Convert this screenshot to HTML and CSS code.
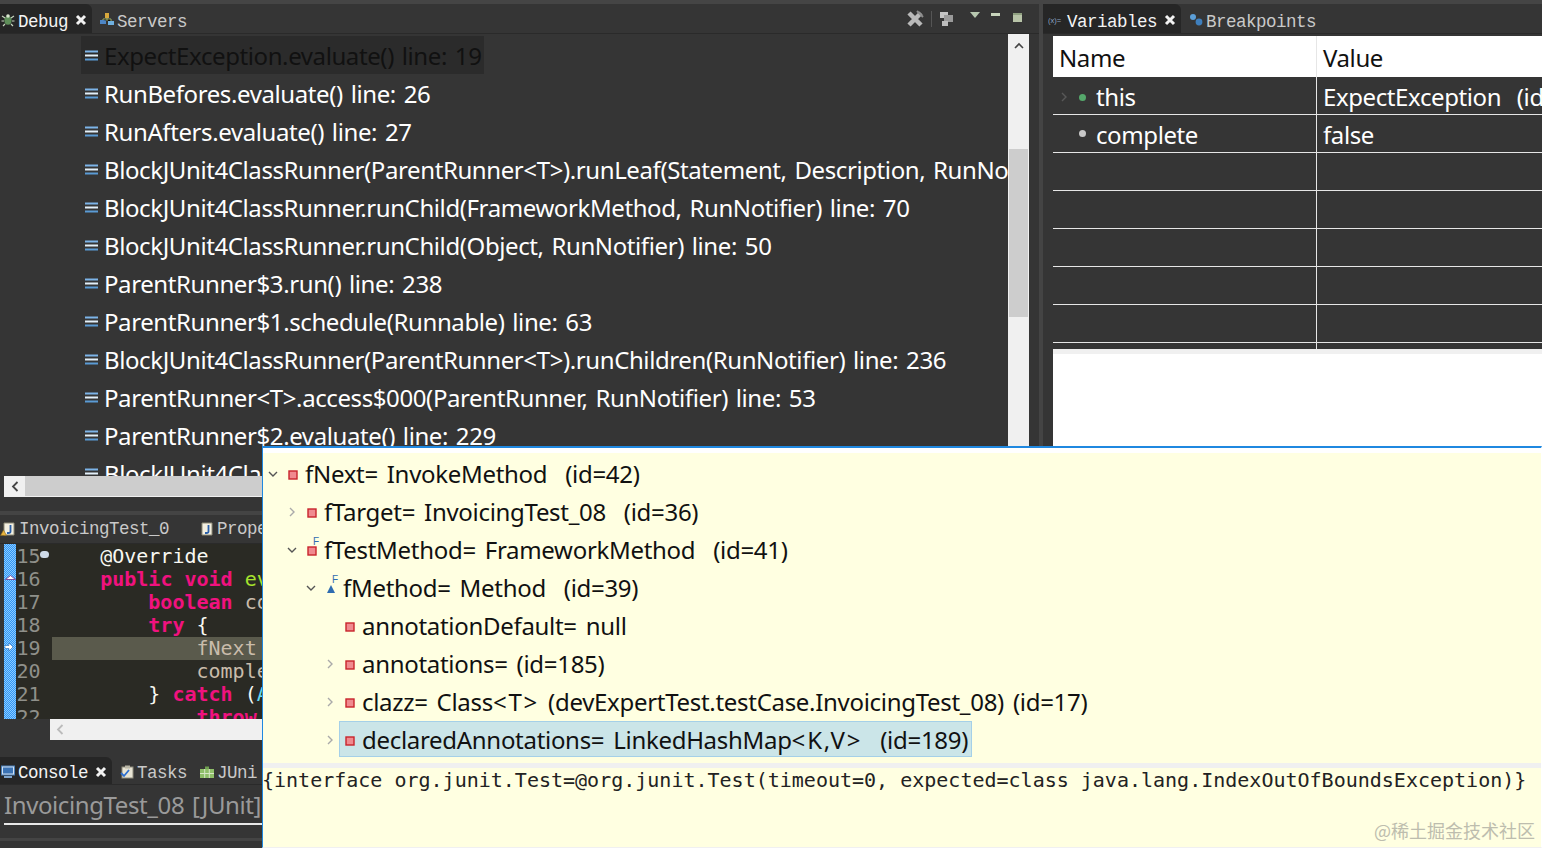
FILE: index.html
```html
<!DOCTYPE html>
<html lang="en">
  <head>
    <meta charset="UTF-8" />
    <meta name="viewport" content="width=device-width, initial-scale=1.0" />
    <title>Eclipse Debug</title>
    <link rel="stylesheet" href="styles.css">
  </head>
  <body>
    <svg class="defs" width="0" height="0">
      <defs>
        <symbol id="frame" viewBox="0 0 13 11">
          <rect x="0" y="0.5" width="13" height="2" fill="#7db4e8"/>
          <rect x="0" y="4.5" width="13" height="2" fill="#e2eff9"/>
          <rect x="0" y="8.5" width="13" height="2" fill="#5b9bd5"/>
        </symbol>
        <symbol id="close" viewBox="0 0 12 12">
          <path d="M2 2 L10 10 M10 2 L2 10" stroke="#f2f2f2" stroke-width="3"/>
        </symbol>
        <symbol id="field" viewBox="0 0 10 10">
          <rect x="1" y="1" width="8" height="8" fill="#f08a8f" stroke="#c8242c" stroke-width="1.4"/>
        </symbol>
        <symbol id="open" viewBox="0 0 10 10">
          <path d="M1 3 L5 7 L9 3" fill="none" stroke="#555" stroke-width="1.4"/>
        </symbol>
        <symbol id="closed" viewBox="0 0 10 10">
          <path d="M3 1 L7 5 L3 9" fill="none" stroke="#aaa" stroke-width="1.4"/>
        </symbol>
        <symbol id="javafile" viewBox="0 0 12 14">
          <path d="M1 1 H11 V13 H1 Z" fill="#f3efe0" stroke="#8d8a76"/>
          <path d="M7.5 3 V9.5 Q7.5 11 5.5 11 H4" fill="none" stroke="#2a5fa8" stroke-width="1.8"/>
        </symbol>
        <pattern id="dots" width="2" height="2" patternUnits="userSpaceOnUse">
          <rect width="1" height="1" fill="#8ccaff"/>
          <rect x="1" y="1" width="1" height="1" fill="#8ccaff"/>
        </pattern>
      </defs>
    </svg>

    <div class="workbench">
      <div class="left-col">
        <section class="debug-view">
          <div class="tabbar">
            <div class="tab active first">
              <svg class="tab-icon" viewBox="0 0 14 14"><ellipse cx="7" cy="7.5" rx="3.6" ry="4.2" fill="#5f8f5a"/><path d="M1 3 L4 5 M13 3 L10 5 M0.5 8 H3 M11 8 H13.5 M2 13 L4 11 M12 13 L10 11" stroke="#c9d6c0" stroke-width="1.2"/><circle cx="7" cy="3" r="1.8" fill="#d8e6cf"/></svg>
              <span>Debug</span>
              <svg class="tab-close"><use href="#close"/></svg>
            </div>
            <div class="tab">
              <svg class="tab-icon" viewBox="0 0 14 14"><rect x="5" y="0" width="4" height="5" fill="#d8a83c"/><rect x="0" y="7" width="6" height="4" fill="#4d86c6"/><rect x="8" y="8" width="6" height="4" fill="#6fb0e0"/><path d="M7 5 V8 M3 7 V6 H11 V8" stroke="#9fb06a"/></svg>
              <span>Servers</span>
            </div>
            <div class="tab-tools">
              <svg width="18" height="18" viewBox="0 0 18 18"><path d="M3 3 L15 15 M15 3 L3 15" stroke="#b9b9b9" stroke-width="4.5"/><path d="M11 1 L17 7" stroke="#8c8c8c" stroke-width="2"/></svg>
              <i class="tool-sep"></i>
              <svg width="15" height="16" viewBox="0 0 15 16"><rect x="1" y="1" width="8" height="6" fill="#c4c4c4"/><rect x="5" y="4" width="9" height="7" fill="#9a9a9a"/><rect x="3" y="10" width="6" height="5" fill="#bdbdbd"/></svg>
              <svg class="tool-menu" width="10" height="6" viewBox="0 0 10 6"><path d="M0 0 H10 L5 6 Z" fill="#b8c8b0"/></svg>
              <i class="tool-min"></i>
              <i class="tool-max"></i>
            </div>
          </div>
          <div class="tree-area">
            <div class="frames">
              <div class="frame-row current"><svg class="frame-icon"><use href="#frame"/></svg><span class="frame-label">ExpectException.evaluate() line: 19</span></div>
              <div class="frame-row"><svg class="frame-icon"><use href="#frame"/></svg><span class="frame-label">RunBefores.evaluate() line: 26</span></div>
              <div class="frame-row"><svg class="frame-icon"><use href="#frame"/></svg><span class="frame-label">RunAfters.evaluate() line: 27</span></div>
              <div class="frame-row"><svg class="frame-icon"><use href="#frame"/></svg><span class="frame-label">BlockJUnit4ClassRunner(ParentRunner&lt;T&gt;).runLeaf(Statement, Description, RunNotifier) line: 78</span></div>
              <div class="frame-row"><svg class="frame-icon"><use href="#frame"/></svg><span class="frame-label">BlockJUnit4ClassRunner.runChild(FrameworkMethod, RunNotifier) line: 70</span></div>
              <div class="frame-row"><svg class="frame-icon"><use href="#frame"/></svg><span class="frame-label">BlockJUnit4ClassRunner.runChild(Object, RunNotifier) line: 50</span></div>
              <div class="frame-row"><svg class="frame-icon"><use href="#frame"/></svg><span class="frame-label">ParentRunner$3.run() line: 238</span></div>
              <div class="frame-row"><svg class="frame-icon"><use href="#frame"/></svg><span class="frame-label">ParentRunner$1.schedule(Runnable) line: 63</span></div>
              <div class="frame-row"><svg class="frame-icon"><use href="#frame"/></svg><span class="frame-label">BlockJUnit4ClassRunner(ParentRunner&lt;T&gt;).runChildren(RunNotifier) line: 236</span></div>
              <div class="frame-row"><svg class="frame-icon"><use href="#frame"/></svg><span class="frame-label">ParentRunner&lt;T&gt;.access$000(ParentRunner, RunNotifier) line: 53</span></div>
              <div class="frame-row"><svg class="frame-icon"><use href="#frame"/></svg><span class="frame-label">ParentRunner$2.evaluate() line: 229</span></div>
              <div class="frame-row"><svg class="frame-icon"><use href="#frame"/></svg><span class="frame-label">BlockJUnit4Cla</span></div>
            </div>
            <div class="vscroll">
              <svg class="vscroll-arrow" width="10" height="7" viewBox="0 0 10 7"><path d="M1 6 L5 2 L9 6" fill="none" stroke="#444" stroke-width="1.6"/></svg>
              <div class="vscroll-thumb"></div>
            </div>
          </div>
          <div class="hscroll">
            <div class="hscroll-btn"><svg width="8" height="11" viewBox="0 0 8 11"><path d="M6.5 1 L2 5.5 L6.5 10" fill="none" stroke="#444" stroke-width="1.8"/></svg></div>
            <div class="hscroll-thumb"></div>
          </div>
        </section>

        <section class="editor-view">
          <div class="tabbar editor-tabs">
            <div class="tab first">
              <svg class="tab-icon file-warn" viewBox="0 0 15 14"><use href="#javafile" x="3" width="12" height="14"/><path d="M0.5 13.5 L3.5 8 L6.5 13.5 Z" fill="#e8b23c" stroke="#8a6a20" stroke-width="0.6"/></svg>
              <span>InvoicingTest_0</span>
            </div>
            <div class="tab tab-wide">
              <svg class="tab-icon file"><use href="#javafile"/></svg>
              <span>Prope</span>
            </div>
          </div>
          <div class="editor">
            <div class="ruler">
              <svg class="ruler-dots" width="12" height="175"><rect width="12" height="175" fill="url(#dots)"/></svg>
              <svg class="ruler-mark override-mark" width="11" height="5" viewBox="0 0 11 5"><path d="M0.5 4.5 L5.5 0.5 L10.5 4.5 Z" fill="#fff" stroke="#7a4fa0"/></svg>
              <svg class="ruler-mark pc-mark" width="8" height="8" viewBox="0 0 8 8"><path d="M0 2.5 H4 V0 L8 4 L4 8 V5.5 H0 Z" fill="#fff" stroke="#2d6cb5" stroke-width="0.6"/></svg>
            </div>
            <div class="line-numbers">
              <div>15</div><div>16</div><div>17</div><div>18</div><div>19</div><div>20</div><div>21</div><div>22</div>
            </div>
            <i class="fold-mark"></i>
            <div class="code">
              <div class="code-line"><span class="plain">    @Override</span></div>
              <div class="code-line"><span class="plain">    </span><b class="kw">public void</b> <span class="fn">ev</span></div>
              <div class="code-line"><span class="plain">        </span><b class="kw">boolean</b> <span class="var">co</span></div>
              <div class="code-line"><span class="plain">        </span><b class="kw">try</b> <span class="plain">{</span></div>
              <div class="code-line hl"><span class="var">            fNext</span></div>
              <div class="code-line"><span class="var">            comple</span></div>
              <div class="code-line"><span class="plain">        } </span><b class="kw">catch</b> <span class="plain">(</span><span class="type">A</span></div>
              <div class="code-line"><span class="plain">            </span><b class="kw">throw</b></div>
            </div>
          </div>
          <div class="editor-hscroll">
            <svg width="8" height="11" viewBox="0 0 8 11"><path d="M6.5 1 L2 5.5 L6.5 10" fill="none" stroke="#bbb" stroke-width="1.8"/></svg>
          </div>
        </section>

        <section class="console-view">
          <div class="tabbar console-tabs">
            <div class="tab active first">
              <svg class="tab-icon" viewBox="0 0 14 14"><rect x="0.5" y="1" width="13" height="9" fill="#cfe0f2" stroke="#4a7fb8"/><rect x="2" y="2.5" width="10" height="6" fill="#3b73b5"/><rect x="3" y="11" width="8" height="2" fill="#7fa6cf"/></svg>
              <span>Console</span>
              <svg class="tab-close"><use href="#close"/></svg>
            </div>
            <div class="tab">
              <svg class="tab-icon" viewBox="0 0 14 14"><rect x="2" y="2" width="11" height="11" fill="#e8e4d4" stroke="#8f8c7c"/><rect x="5" y="0.5" width="5" height="3" fill="#b9b6a6"/><path d="M1 8 L4 11 L9 5" fill="none" stroke="#2d6fd0" stroke-width="1.8"/></svg>
              <span>Tasks</span>
            </div>
            <div class="tab">
              <svg class="tab-icon" viewBox="0 0 14 14"><rect x="0" y="4" width="14" height="9" fill="#8fbf6a"/><path d="M0 8.5 H14 M4.7 4 V13 M9.3 4 V13" stroke="#d6e8c6"/><rect x="5" y="1.5" width="4" height="2.5" fill="#6f9f50"/></svg>
              <span>JUni</span>
            </div>
          </div>
          <div class="console-title">InvoicingTest_08 [JUnit]</div>
          <div class="console-rule"></div>
          <div class="console-band"></div>
        </section>
      </div>

      <div class="sash"></div>

      <div class="right-col">
        <div class="tabbar">
          <div class="tab active var-tab">
            <svg class="tab-icon var-icon" viewBox="0 0 16 12"><text class="var-glyph" x="0" y="9">(x)=</text></svg>
            <span>Variables</span>
            <svg class="tab-close"><use href="#close"/></svg>
          </div>
          <div class="tab">
            <svg class="tab-icon" viewBox="0 0 14 14"><circle cx="4" cy="4" r="3" fill="#5c9fd8"/><circle cx="10" cy="9" r="3.4" fill="#3f7fbd"/></svg>
            <span>Breakpoints</span>
          </div>
        </div>
        <div class="vars">
          <div class="vars-head">
            <div class="col-name">Name</div>
            <div class="col-value">Value</div>
          </div>
          <div class="vars-row">
            <div class="col-name"><svg class="var-twist"><use href="#closed"/></svg><i class="dot green"></i>this</div>
            <div class="col-value">ExpectException  (id=35)</div>
          </div>
          <div class="vars-row">
            <div class="col-name"><span class="var-twist"></span><i class="dot grey"></i>complete</div>
            <div class="col-value">false</div>
          </div>
          <div class="vars-row"><div class="col-name"></div><div class="col-value"></div></div>
          <div class="vars-row"><div class="col-name"></div><div class="col-value"></div></div>
          <div class="vars-row"><div class="col-name"></div><div class="col-value"></div></div>
          <div class="vars-row"><div class="col-name"></div><div class="col-value"></div></div>
          <div class="vars-row"><div class="col-name"></div><div class="col-value"></div></div>
          <div class="vars-row short"><div class="col-name"></div><div class="col-value"></div></div>
          <div class="vars-strip"></div>
          <div class="vars-detail"></div>
        </div>
      </div>
    </div>

    <!-- inspect popup, sits over the views -->
    <div class="popup">
      <div class="popup-tree">
        <div class="pop-row depth-0"><svg class="twist"><use href="#open"/></svg><span class="pop-item"><svg class="pop-icon"><use href="#field"/></svg><span>fNext= InvokeMethod  (id=42)</span></span></div>
        <div class="pop-row depth-1"><svg class="twist"><use href="#closed"/></svg><span class="pop-item"><svg class="pop-icon"><use href="#field"/></svg><span>fTarget= InvoicingTest_08  (id=36)</span></span></div>
        <div class="pop-row depth-1"><svg class="twist"><use href="#open"/></svg><span class="pop-item"><span class="pop-icon-wrap"><svg class="pop-icon"><use href="#field"/></svg><em class="final">F</em></span><span>fTestMethod= FrameworkMethod  (id=41)</span></span></div>
        <div class="pop-row depth-2"><svg class="twist"><use href="#open"/></svg><span class="pop-item"><span class="pop-icon-wrap"><svg class="pop-icon" viewBox="0 0 10 10"><path d="M5 1 L9 9 H1 Z" fill="#2f6cb0"/></svg><em class="final">F</em></span><span>fMethod= Method  (id=39)</span></span></div>
        <div class="pop-row depth-3"><span class="twist"></span><span class="pop-item"><svg class="pop-icon"><use href="#field"/></svg><span>annotationDefault= null</span></span></div>
        <div class="pop-row depth-3"><svg class="twist"><use href="#closed"/></svg><span class="pop-item"><svg class="pop-icon"><use href="#field"/></svg><span>annotations= (id=185)</span></span></div>
        <div class="pop-row depth-3"><svg class="twist"><use href="#closed"/></svg><span class="pop-item"><svg class="pop-icon"><use href="#field"/></svg><span>clazz= Class<span class="generic">&lt;T&gt;</span> (devExpertTest.testCase.InvoicingTest_08) (id=17)</span></span></div>
        <div class="pop-row depth-3"><svg class="twist"><use href="#closed"/></svg><span class="pop-item selected"><svg class="pop-icon"><use href="#field"/></svg><span>declaredAnnotations= LinkedHashMap<span class="generic">&lt;K,V&gt;</span>  (id=189)</span></span></div>
      </div>
      <div class="pop-sep"></div>
      <div class="pop-detail">{interface org.junit.Test=@org.junit.Test(timeout=0, expected=class java.lang.IndexOutOfBoundsException)}</div>
      <div class="watermark">@稀土掘金技术社区</div>
    </div>
  </body>
</html>
```

FILE: styles.css
```css
html, body {
  margin: 0;
  padding: 0;
  height: 100%;
  overflow: hidden;
}

body {
  position: relative;
  background: #353535;
  font-family: "Noto Sans", Arial, sans-serif;
  font-size: 24px;
  letter-spacing: -0.4px;
  word-spacing: 2px;
  color: #fff;
}

.defs {
  position: absolute;
}

.workbench {
  display: flex;
  height: 848px;
  padding-top: 4px;
  box-sizing: border-box;
  background: linear-gradient(#454545 0, #454545 4px, #353535 4px);
}

.left-col {
  width: 1039px;
  display: flex;
  flex-direction: column;
}

.sash {
  width: 4px;
  background: #444;
}

.right-col {
  flex: 1;
  min-width: 0;
  display: flex;
  flex-direction: column;
  height: 442px;
}

/* tabs */
.tabbar {
  height: 30px;
  box-sizing: border-box;
  display: flex;
  align-items: stretch;
  border-bottom: 1px solid #2a2a2a;
  font-family: "Liberation Mono", monospace;
  font-size: 17.5px;
  letter-spacing: -0.5px;
  word-spacing: 0;
  color: #c9c9c9;
  flex-shrink: 0;
}

.tab {
  display: flex;
  align-items: center;
  padding: 2px 5px 0 8px;
  gap: 3px;
}

.tab span {
  margin-top: 4px;
}

.tab.first {
  padding-left: 1px;
}

.tab.tab-wide {
  padding-left: 27px;
  gap: 4px;
}

.tab.var-tab {
  padding-left: 5px;
}

.tab.active {
  background: #262626;
  color: #f4f4f4;
  border-radius: 0 6px 0 0;
}

.tab-icon {
  width: 14px;
  height: 14px;
  flex-shrink: 0;
}

.tab-icon.var-icon {
  width: 16px;
}

.tab-close {
  width: 12px;
  height: 12px;
  margin-left: 4px;
}

.var-glyph {
  font-size: 7.5px;
  letter-spacing: 0;
  fill: #8fa6c4;
  font-family: "Liberation Sans", sans-serif;
}

.tab-tools {
  margin-left: auto;
  display: flex;
  align-items: center;
  gap: 7px;
  padding-right: 17px;
}

.tool-sep {
  width: 1px;
  height: 16px;
  background: #555;
}

.tool-menu {
  margin: -8px 0 0 9px;
}

.tool-min {
  width: 9px;
  height: 3px;
  background: #c8d4bc;
  margin: -8px 0 0 4px;
}

.tool-max {
  width: 9px;
  height: 9px;
  background: #b8c4a8;
  border-top: 2px solid #8fa080;
  box-sizing: border-box;
  margin: -2px 0 0 6px;
}

/* debug view */
.debug-view {
  height: 511px;
  display: flex;
  flex-direction: column;
  flex-shrink: 0;
  border-bottom: 4px solid #444;
  box-sizing: border-box;
}

.tree-area {
  display: flex;
  height: 442px;
  padding: 2px 10px 0 0;
  box-sizing: border-box;
  width: 1039px;
  flex-shrink: 0;
}

.frames {
  width: 1008px;
  overflow: hidden;
  flex-shrink: 0;
}

.frame-row {
  height: 38px;
  display: flex;
  align-items: center;
  white-space: nowrap;
  margin-left: 81px;
  color: #fff;
}

.frame-row.current {
  width: 403px;
  background: #2b2b2b;
  color: #111;
}

.frame-icon {
  width: 13px;
  height: 11px;
  margin: 0 6px 0 4px;
  flex-shrink: 0;
}

.vscroll {
  width: 21px;
  background: #f0f0f0;
  margin-top: -2px;
  height: 442px;
  box-sizing: border-box;
  display: flex;
  flex-direction: column;
  align-items: center;
  padding-top: 8px;
}

.vscroll-thumb {
  width: 19px;
  height: 168px;
  background: #cdcdcd;
  margin-top: 100px;
}

.hscroll {
  height: 21px;
  margin: 0 0 0 4px;
  background: #cdcdcd;
  display: flex;
  border-bottom: 1px solid #f0f0f0;
  box-sizing: border-box;
  flex-shrink: 0;
}

.hscroll-btn {
  width: 21px;
  background: #f0f0f0;
  display: flex;
  align-items: center;
  justify-content: center;
}

/* editor */
.editor-view {
  display: flex;
  flex-direction: column;
  height: 240px;
  flex-shrink: 0;
}

.editor-tabs {
  height: 29px;
}

.editor-tabs .tab {
  padding-top: 0;
}

.editor-tabs .tab span {
  margin-top: 0;
}

.editor-tabs .tab.first {
  padding-left: 0;
  gap: 4px;
}

.tab-icon.file {
  width: 12px;
  height: 14px;
}

.tab-icon.file-warn {
  width: 15px;
  height: 14px;
}

.editor {
  height: 175px;
  display: flex;
  position: relative;
  background: #2a2a24;
  overflow: hidden;
  margin-left: 4px;
  flex-shrink: 0;
}

.ruler {
  width: 12px;
  position: relative;
  background: #2f96f5;
  flex-shrink: 0;
}

.ruler-dots {
  display: block;
  shape-rendering: crispEdges;
}

.ruler-mark {
  position: absolute;
  left: 1px;
}

.override-mark {
  top: 31px;
}

.pc-mark {
  top: 99px;
}

.line-numbers {
  width: 33.5px;
  padding-left: 0.5px;
  font-family: "DejaVu Sans Mono", monospace;
  font-size: 20px;
  letter-spacing: 0;
  line-height: 23px;
  color: #8f908a;
  flex-shrink: 0;
  padding-top: 1px;
}

.fold-mark {
  position: absolute;
  left: 36px;
  top: 7px;
  width: 9px;
  height: 7px;
  border-radius: 4px;
  background: #cfdbe8;
}

.code {
  flex: 1;
  font-family: "DejaVu Sans Mono", monospace;
  font-size: 20px;
  letter-spacing: 0;
  word-spacing: 0;
  line-height: 23px;
  padding-top: 1px;
  margin-left: 2px;
}

.code-line {
  height: 23px;
  white-space: pre;
}

.code-line.hl {
  background: #5a5a4c;
}

.code .plain { color: #f8f8f2; }
.code .kw { color: #f0127f; }
.code .fn { color: #a6e22e; }
.code .var { color: #c9bcab; }
.code .type { color: #66d9ef; }

.editor-hscroll {
  height: 21px;
  margin-left: 50px;
  background: #f0f0f0;
  display: flex;
  align-items: center;
  padding-left: 6px;
}

/* console */
.console-view {
  flex: 1;
  display: flex;
  flex-direction: column;
}

.console-tabs {
  height: 28px;
  margin-top: 2px;
}

.console-tabs .tab span {
  margin-top: 2px;
}

.console-title {
  color: #9a9a9a;
  white-space: nowrap;
  overflow: hidden;
  padding-left: 4px;
  height: 38px;
  line-height: 40px;
}

.console-rule {
  height: 2px;
  background: #e8e8e8;
  margin-left: 4px;
}

.console-band {
  height: 3px;
  margin: 13px 0 0;
  background: #444;
}

/* variables */
.vars {
  margin: 2px 0 0 10px;
  flex: 1;
  display: flex;
  flex-direction: column;
  overflow: hidden;
  white-space: pre;
}

.vars-head {
  display: flex;
  height: 41px;
  background: #fff;
  color: #111;
  flex-shrink: 0;
}

.vars-head > div,
.vars-row > div {
  padding-top: 2px;
}

.vars-row {
  display: flex;
  height: 38px;
  box-sizing: border-box;
  border-bottom: 1px solid #e6e6e6;
  flex-shrink: 0;
}

.vars-row.short {
  height: 6px;
  border-bottom: 0;
}

.col-name {
  width: 264px;
  display: flex;
  align-items: center;
  padding-left: 6px;
  box-sizing: border-box;
  border-right: 1px solid #e6e6e6;
  flex-shrink: 0;
}

.col-value {
  padding-left: 6px;
  display: flex;
  align-items: center;
  flex: 1;
}

.var-twist {
  width: 10px;
  height: 10px;
  margin-right: 10px;
  opacity: 0.3;
  flex-shrink: 0;
}

.dot {
  width: 7px;
  height: 7px;
  border-radius: 50%;
  margin-right: 10px;
}

.dot.green {
  background: #55a86b;
  margin-top: 2px;
}

.dot.grey {
  background: #c8c8c8;
  margin-top: -2px;
}

.vars-strip {
  height: 5px;
  background: #f0f0f0;
  flex-shrink: 0;
}

.vars-detail {
  flex: 1;
  background: #fff;
}

/* popup */
.popup {
  position: absolute;
  left: 262px;
  top: 446px;
  right: 0;
  bottom: 0;
  background: #ffffe1;
  border-top: 2px solid #1f88e0;
  border-left: 1px solid #1f88e0;
  border-right: 1px solid #fff;
  border-bottom: 1px solid #f0f0f0;
  display: flex;
  flex-direction: column;
  color: #111;
  box-sizing: border-box;
  letter-spacing: -0.3px;
  word-spacing: 3px;
}

.popup-tree {
  height: 315px;
  padding-top: 1px;
  box-sizing: border-box;
  border-top: 5px solid #fff;
  flex-shrink: 0;
}

.pop-row {
  height: 38px;
  display: flex;
  align-items: center;
  white-space: pre;
}

.depth-0 { padding-left: 5px; }
.depth-1 { padding-left: 24px; }
.depth-2 { padding-left: 43px; }
.depth-3 { padding-left: 62px; }

.twist {
  width: 10px;
  height: 10px;
  margin: 2px 4px 0 0;
  flex-shrink: 0;
}

.pop-item {
  display: flex;
  align-items: center;
  height: 36px;
  padding: 0 3px 0 5px;
  box-sizing: border-box;
  border: 1px solid transparent;
}

.pop-item.selected {
  background: #cbe5e8;
  border-color: #a5d0e8;
}

.pop-icon {
  width: 10px;
  height: 10px;
  margin: 4px 7px 0 0;
  flex-shrink: 0;
}

.pop-icon-wrap {
  position: relative;
  display: flex;
}

.generic {
  letter-spacing: 1.8px;
}

.final {
  position: absolute;
  left: 6px;
  top: -6px;
  font-size: 10px;
  font-style: normal;
  color: #2f6cb0;
  font-family: "Liberation Sans", sans-serif;
}

.pop-sep {
  height: 5px;
  background: #f0f0f0;
  flex-shrink: 0;
}

.pop-detail {
  font-family: "DejaVu Sans Mono", monospace;
  font-size: 20px;
  letter-spacing: 0;
  word-spacing: 0;
  white-space: pre;
  margin-left: -1px;
  color: #222;
}

.watermark {
  position: absolute;
  right: 6px;
  bottom: 4px;
  font-size: 18px;
  letter-spacing: 0;
  color: #bdbdae;
  font-family: "Noto Sans CJK SC", "Noto Sans", sans-serif;
}
```
